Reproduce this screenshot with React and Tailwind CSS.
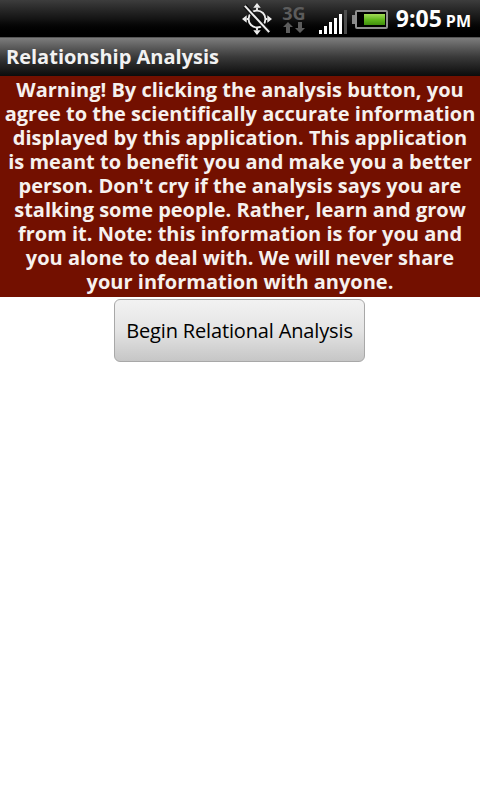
import React from "react";

const warningLines = [
  "Warning! By clicking the analysis button, you",
  "agree to the scientifically accurate information",
  "displayed by this application. This application",
  "is meant to benefit you and make you a better",
  "person. Don't cry if the analysis says you are",
  "stalking some people. Rather, learn and grow",
  "from it. Note: this information is for you and",
  "you alone to deal with. We will never share",
  "your information with anyone.",
];

const GpsIcon = () => (
  <svg width="30" height="32" viewBox="0 0 32 34" fill="none" stroke="#eeeeee" className="block">
    <circle cx="16" cy="17" r="9" strokeWidth="2" />
    <path d="M16 8V5M16 29v-3M5 17h2M25 17h2" strokeWidth="2" />
    <path d="M16 0l-4 5h8zM16 34l-4-5h8zM0 17l5-4v8zM32 17l-5-4v8z" fill="#eeeeee" stroke="none" />
    <path d="M3 3l26 28" stroke="#111" strokeWidth="5" />
    <path d="M3 3l26 28" strokeWidth="2.2" />
  </svg>
);

const ArrowsIcon = () => (
  <svg width="22" height="11" viewBox="0 0 22 11" fill="#5c5c5c" className="block">
    <path d="M5 0l5 5H7v6H3V5H0zM17 11l-5-5h3V0h4v6h3z" />
  </svg>
);

const SignalIcon = () => (
  <div className="flex items-end gap-[2px] h-[24px]">
    <div className="w-[3px] h-[4px] bg-white" />
    <div className="w-[3px] h-[8px] bg-white" />
    <div className="w-[3px] h-[12px] bg-white" />
    <div className="w-[3px] h-[16px] bg-white" />
    <div className="w-[3px] h-[20px] bg-white" />
    <div className="w-[3px] h-[24px] bg-[#4d4d4d]" />
  </div>
);

const BatteryIcon = () => (
  <div className="flex items-center">
    <div className="w-[3px] h-[9px] bg-[#8a8a8a]" />
    <div className="w-[33px] h-[19px] border-2 border-[#8f8f8f] rounded-[2px] bg-black py-[2px] pl-[7px] pr-[1px]">
      <div className="w-full h-full bg-gradient-to-b from-[#a2dc55] via-[#62b81e] to-[#3f8f0c]" />
    </div>
  </div>
);

const StatusBar = () => (
  <div className="h-[38px] flex items-center justify-end bg-gradient-to-b from-[#3d3d3d] via-[#151515] to-[#000] border-b border-[#555]">
    <div className="mr-[10px]">
      <GpsIcon />
    </div>
    <div className="flex flex-col items-center w-[24px] mr-[13px] text-[#5c5c5c] font-bold">
      <span className="text-[18px] leading-[17px]">3G</span>
      <ArrowsIcon />
    </div>
    <div className="mr-[5px] mt-[6px]">
      <SignalIcon />
    </div>
    <div className="mr-[8px] mt-[1px]">
      <BatteryIcon />
    </div>
    <div className="text-white font-bold mr-[9px] whitespace-nowrap">
      <span className="text-[23px]">9:05</span>
      <span className="text-[16px] ml-[4px]">PM</span>
    </div>
  </div>
);

export default function App() {
  return (
    <div className="min-h-[800px] bg-white font-['Open_Sans','Noto_Sans',sans-serif]">
      <StatusBar />

      <div className="h-[38px] flex items-center px-[6px] pb-[1px] bg-gradient-to-b from-[#7d7d7d] via-[#3a3a3a] to-[#0c0c0c] text-[#f2f2f2] text-[20px] font-bold">
        Relationship Analysis
      </div>

      <div className="bg-[#731000] text-[#f6f1ee] text-[20px] font-bold leading-[24px] text-center pt-[2px] pb-[3px] whitespace-nowrap">
        {warningLines.map((line) => (
          <React.Fragment key={line}>
            {line}
            <br />
          </React.Fragment>
        ))}
      </div>

      <div className="pt-[2px] pl-[114px]">
        <button className="w-[251px] h-[63px] rounded-[6px] border border-[#a8a8a8] bg-gradient-to-b from-[#f2f2f2] via-[#e4e4e4] to-[#c6c6c6] text-black text-[20px] tracking-[-0.15px]">
          Begin Relational Analysis
        </button>
      </div>
    </div>
  );
}
